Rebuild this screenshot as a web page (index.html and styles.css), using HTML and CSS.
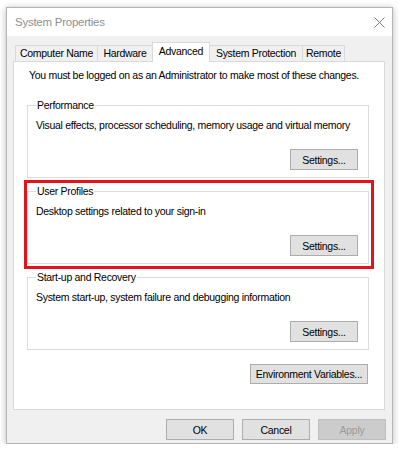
FILE: index.html
```html
<!DOCTYPE html>
<html>
<head>
<meta charset="utf-8">
<link rel="stylesheet" href="styles.css">
</head>
<body>
<div class="window">
  <div class="titlebar">
    <span class="title">System Properties</span>
    <svg class="close" width="11" height="11" viewBox="0 0 11 11"><path d="M0.5 0.5 L10.5 10.5 M10.5 0.5 L0.5 10.5" stroke="#7a7a7a" stroke-width="1" fill="none"/></svg>
  </div>
  <div class="body">
    <div class="tabs">
      <div class="tab tab-cn">Computer Name</div>
      <div class="tab tab-hw">Hardware</div>
      <div class="tab tab-adv selected">Advanced</div>
      <div class="tab tab-sp">System Protection</div>
      <div class="tab tab-rm">Remote</div>
    </div>
    <div class="panel">
      <div class="admin">You must be logged on as an Administrator to make most of these changes.</div>
      <div class="groups">
        <fieldset class="group">
          <legend>Performance</legend>
          <div class="desc">Visual effects, processor scheduling, memory usage and virtual memory</div>
          <div class="btnrow"><button class="btn">Settings...</button></div>
        </fieldset>
        <div class="highlight">
          <fieldset class="group">
            <legend>User Profiles</legend>
            <div class="desc">Desktop settings related to your sign-in</div>
            <div class="btnrow"><button class="btn">Settings...</button></div>
          </fieldset>
          <div class="redbox"></div>
        </div>
        <fieldset class="group">
          <legend>Start-up and Recovery</legend>
          <div class="desc">System start-up, system failure and debugging information</div>
          <div class="btnrow"><button class="btn">Settings...</button></div>
        </fieldset>
      </div>
      <div class="envrow"><button class="btn btn-env">Environment Variables...</button></div>
    </div>
    <div class="footer">
      <button class="btn">OK</button>
      <button class="btn">Cancel</button>
      <button class="btn disabled">Apply</button>
    </div>
  </div>
</div>
</body>
</html>
```
FILE: styles.css
```css
* { box-sizing: border-box; }
html, body { margin: 0; padding: 0; background: #ffffff; }
body {
  font-family: "Liberation Sans", Arial, sans-serif;
  font-size: 10.5px;
  letter-spacing: -0.3px;
  color: #000;
}
.window {
  margin: 7px 0 0 6px;
  width: 387px;
  height: 437px;
  border: 1px solid #b4b4b4;
  box-shadow: 0 1px 7px rgba(0,0,0,0.28);
  display: flex;
  flex-direction: column;
  background: #f0f0f0;
}
.titlebar {
  height: 28px;
  flex: none;
  background: #ffffff;
  display: flex;
  align-items: center;
  justify-content: space-between;
  padding: 0 7px 0 8px;
}
.title {
  font-size: 11.5px;
  letter-spacing: -0.25px;
  color: #8f8f8f;
}
.close { display: block; margin-top: 0; }
.body {
  flex: 1;
  padding: 6px 6px 0 6px;
  display: flex;
  flex-direction: column;
}
.tabs {
  display: flex;
  align-items: flex-end;
  height: 20px;
  margin: 0 0 -1px 2px;
}
.tab {
  height: 17px;
  line-height: 15px;
  border: 1px solid #d9d9d9;
  background: #f0f0f0;
  text-align: center;
  white-space: nowrap;
  margin-left: -1px;
}
.tab-cn { width: 83px; margin-left: 0; }
.tab-hw { width: 56px; }
.tab-adv { width: 58px; }
.tab-sp { width: 94px; }
.tab-rm { width: 43px; }
.tab.selected {
  height: 20px;
  line-height: 17px;
  background: #ffffff;
  border-bottom: none;
  position: relative;
  z-index: 1;
}
.panel {
  width: 372px;
  height: 349px;
  flex: none;
  background: #ffffff;
  border: 1px solid #d9d9d9;
  padding: 6px 15px 0 13px;
}
.admin {
  line-height: 15px;
  margin: 0 0 15px 2px;
}
.groups {
  display: flex;
  flex-direction: column;
  gap: 6px;
}
.group {
  margin: 0;
  border: 1px solid #dcdcdc;
  padding: 0 10px 7px 8px;
  min-width: 0;
}
.group legend {
  padding: 0 1px;
  line-height: 15px;
}
.desc {
  margin-top: 5px;
  line-height: 15px;
}
.btnrow {
  display: flex;
  justify-content: flex-end;
  margin-top: 16px;
}
.btn {
  font-family: "Liberation Sans", Arial, sans-serif;
  font-size: 10.5px;
  letter-spacing: -0.3px;
  color: #000;
  width: 68px;
  height: 21px;
  padding: 0;
  margin: 0;
  background: #e1e1e1;
  border: 1px solid #adadad;
  border-radius: 0;
}
.btn.disabled {
  background: #cccccc;
  border-color: #bfbfbf;
  color: #9b9b9b;
}
.highlight { position: relative; }
.redbox {
  position: absolute;
  top: -4px;
  left: -3px;
  right: -5px;
  bottom: -5px;
  border: 3px solid #e3131d;
  pointer-events: none;
}
.envrow {
  display: flex;
  justify-content: flex-end;
  margin-top: 14px;
  padding-right: 1px;
}
.btn-env { width: 118px; height: 20px; }
.footer {
  display: flex;
  justify-content: flex-end;
  gap: 8px;
  padding-top: 9px;
}
```
